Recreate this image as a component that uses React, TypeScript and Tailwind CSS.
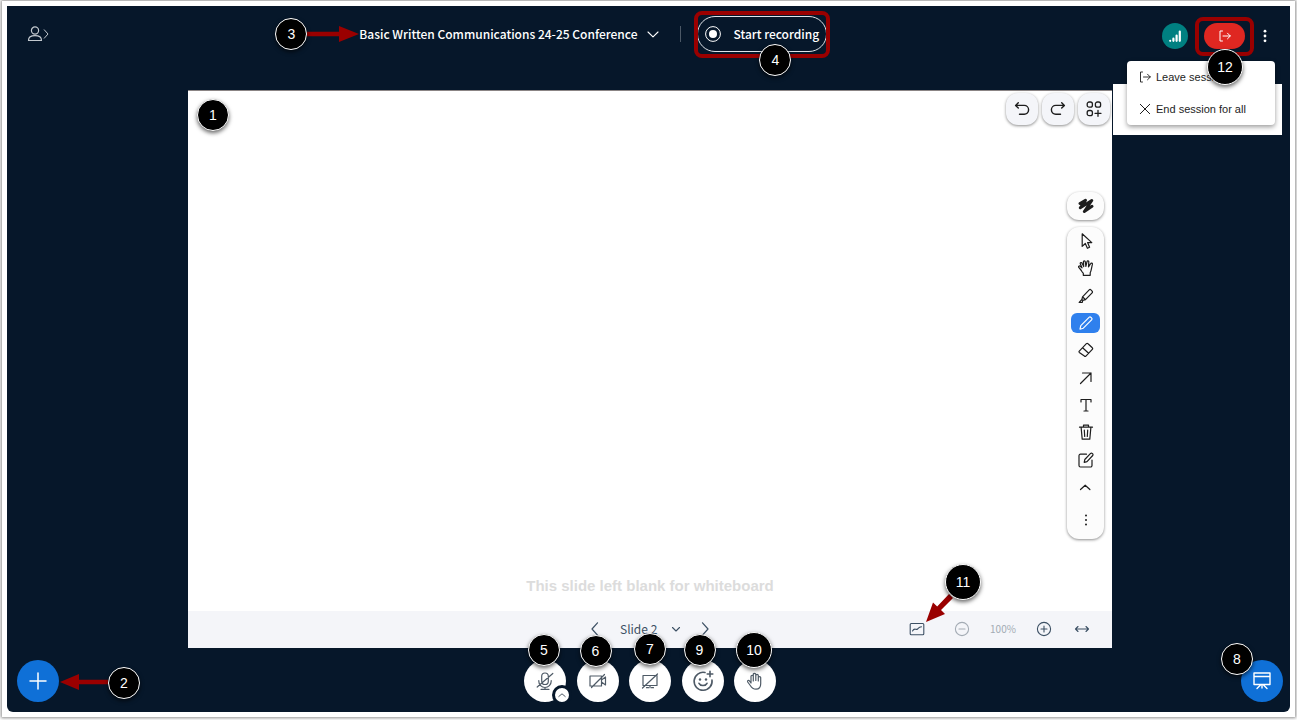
import React from 'react';

interface IconProps {
  d: string;
  size?: string;
  box?: number;
  stroke?: number;
  children?: React.ReactNode;
}

const Icon: React.FC<IconProps> = ({ d, size = 'size-4', box = 16, stroke = 1.2, children }) => (
  <svg
    className={`${size} shrink-0`}
    viewBox={`0 0 ${box} ${box}`}
    fill="none"
    stroke="currentColor"
    strokeWidth={stroke}
    strokeLinecap="round"
    strokeLinejoin="round"
    aria-hidden="true"
  >
    <path d={d} />
    {children}
  </svg>
);

const Dots: React.FC = () => (
  <svg className="size-4" viewBox="0 0 16 16" fill="currentColor" aria-hidden="true">
    <circle cx="8" cy="3.2" r="1.4" />
    <circle cx="8" cy="8" r="1.4" />
    <circle cx="8" cy="12.8" r="1.4" />
  </svg>
);

interface MarkerProps {
  n: number;
  className: string;
  large?: boolean;
}

const Marker: React.FC<MarkerProps> = ({ n, className, large }) => (
  <span
    className={`absolute z-30 flex items-center justify-center rounded-full border border-white bg-black text-sm font-normal text-white shadow-[0_2px_4px_rgba(0,0,0,0.6)] font-['Liberation_Sans',sans-serif] ${
      large ? 'size-9' : 'size-8'
    } ${className}`}
  >
    {n}
  </span>
);

const tools = [
  { name: 'Select', d: 'M4.2.8v12.6l3.1-2.9 2.1 4.8 2.2-1-2-4.7h4.2z' },
  {
    name: 'Hand',
    d: 'M3.3 10.5.8 7.4c-.7-1 .5-2 1.4-1.1L4 7.8 2.3 3.8c-.4-1.2 1.3-1.8 1.8-.6l1.6 3.4L5.4 1.8c0-1.3 1.7-1.4 1.9 0l.6 4.6L9 1.7c.3-1.2 2-.9 1.8.3l-.3 4.8 2.1-3.2c.6-1 2.1-.4 1.8.8-.9 3-.9 6-2.2 8.3v2.6H5.3v-2c-1-.9-1.4-1.7-2-2.8z',
  },
  {
    name: 'Highlight',
    d: 'M4.5 8.8 11.2 1.9c.5-.5 1.2-.5 1.7 0l1.2 1.2c.5.5.5 1.2 0 1.7L7.5 11.7M4.5 8.8l-.6 2.7.9.9 2.7-.7L4.5 8.8M3.9 11.5 1.2 14.5h3l.6-2.1',
  },
  { name: 'Draw', d: 'M2 14.2l.8-3.5 8.5-8.5c1-1 3.5 1.5 2.5 2.5l-8.5 8.5z', active: true },
  {
    name: 'Eraser',
    d: 'M1.3 9.1 8.4 1.7c.5-.5 1.1-.5 1.6 0l4.3 4.1c.5.5.5 1.1 0 1.6l-6.4 6.7c-.5.5-1 .5-1.5 0L1.3 10.4c-.5-.4-.4-.9 0-1.3zM4.6 5.7l6 5.6',
  },
  { name: 'Arrow', d: 'M2.5 13.5 13 3M4.5 3H13v8.5' },
  { name: 'Text', d: 'M3 5V2.5h10V5M8 2.5V14M6 14h4' },
  { name: 'Delete', d: 'M1.5 3.2h13M5.5 3.2V1.2h5v2M3.1 3.2l1.1 11.9h7.6l1.1-11.9M6.3 6l.4 6.5M9.7 6l-.4 6.5' },
  {
    name: 'Note',
    d: 'M8.5 2.2H2.5A1.5 1.5 0 0 0 1 3.7v9.8A1.5 1.5 0 0 0 2.5 15h10a1.5 1.5 0 0 0 1.5-1.5V8M6.2 10.4l.6-2.9 5.8-6.1c1.1-1 3.2 1 2.1 2.1L9 9.7z',
  },
  { name: 'Collapse', d: 'M2.5 10.5 7.2 6.2l4.7 4.3' },
];

const boardButton =
  'flex size-8 items-center justify-center rounded-xl bg-[#f4f5f9] text-[#1d1d1d] shadow-[0_1px_3px_rgba(0,0,0,0.45)]';
const mediaButton = 'flex size-[42px] items-center justify-center rounded-full bg-white text-[#4e5a66]';

const Header: React.FC = () => (
  <header className="relative z-10 grid h-[84px] grid-cols-[351fr_auto_461fr] items-start pt-[10px] text-white">
    <div className="flex h-9 items-center pl-5">
      <button type="button" aria-label="Users and messages" className="flex items-center text-[#c3c9cf]">
        <Icon size="size-4" d="M1.5 14.5c0-3.4 2.3-4.8 6.5-4.8s6.5 1.4 6.5 4.8z">
          <circle cx="8" cy="4.5" r="3.6" />
        </Icon>
        <svg className="h-4 w-[6px]" viewBox="0 0 6 16" fill="none" stroke="currentColor" aria-hidden="true">
          <path d="M1 3.500 5 8l-4 4.500" />
        </svg>
      </button>
    </div>

    <div className="flex h-9 items-center">
      <div className="relative">
        <button type="button" className="flex items-center gap-[10px] text-xs font-medium">
          Basic Written Communications 24-25 Conference
          <Icon size="size-3" box={12} stroke={1.1} d="M1 4l5 4.8L11 4" />
        </button>
        <Marker n={3} className="top-1/2 -left-[84px] -translate-y-1/2" />
        <svg className="absolute top-1/2 -left-[52px] h-4 w-[52px] -translate-y-1/2" viewBox="0 0 52 16" fill="#9a0000" aria-hidden="true">
          <path d="M0 5.700h32V0l20 8-20 8v-5.700H0z" />
        </svg>
      </div>
      <span className="mr-4 ml-[21px] h-4 w-px bg-[#4b5866]" />
      <div className="relative">
        <button
          type="button"
          className="flex h-9 items-center gap-3 rounded-full border border-[#dfe3e8] px-[7px] text-xs font-medium"
        >
          <svg className="size-4" viewBox="0 0 16 16" fill="none" stroke="currentColor" aria-hidden="true">
            <circle cx="8" cy="8" r="7.4" />
            <circle cx="8" cy="8" r="4" fill="currentColor" stroke="none" />
          </svg>
          Start recording
        </button>
        <span className="pointer-events-none absolute -inset-x-[3px] -top-[5px] -bottom-[6px] rounded-lg border-4 border-[#9a0000]" />
        <Marker n={4} className="top-7 left-[62px]" />
      </div>
    </div>

    <div className="flex h-10 items-center justify-end gap-3 pr-[17px]">
      <button type="button" aria-label="Connection status" className="mr-1 flex size-[26px] items-center justify-center rounded-full bg-[#008081]">
        <svg className="h-3 w-3" viewBox="0 0 12 12" fill="none" stroke="currentColor" strokeWidth="2.2" strokeLinecap="round" aria-hidden="true">
          <path d="M1.2 10.8v.01M4.4 10.8V8.7M7.6 10.8V5.5M10.8 10.8V1.5" />
        </svg>
      </button>
      <div className="relative">
        <button type="button" aria-label="Leave" className="flex h-[26px] w-[41px] items-center justify-center rounded-full bg-[#df2721]">
          <Icon size="size-3" box={12} stroke={1} d="M3.500 1H1v10h2.500M4 6h7.300M8.500 3.200 11.300 6 8.500 8.800" />
        </button>
        <span className="pointer-events-none absolute -inset-x-[9px] -top-[6px] -bottom-[7px] rounded-lg border-4 border-[#9a0000]" />
        <div className="absolute top-[61px] -left-[91px] h-[51px] w-[169px] bg-white" />
        <div className="absolute top-[38px] -left-[77px] w-[148px] rounded bg-white text-[11px] text-[#1d1d1d] shadow-[0_2px_5px_rgba(0,0,0,0.4)] font-['Liberation_Sans',sans-serif]">
          <button type="button" className="flex h-8 w-full items-center gap-[5px] pl-3">
            <Icon size="size-3" box={12} stroke={0.9} d="M3.500 1H1.500v10h2M4.500 6h6.800M8.500 3.200 11.300 6 8.500 8.800" />
            Leave session
          </button>
          <button type="button" className="flex h-8 w-full items-center gap-[5px] pl-3">
            <Icon size="size-3" box={12} stroke={1} d="M1.300 1.300l9.400 9.400M10.700 1.300l-9.400 9.400" />
            End session for all
          </button>
        </div>
        <Marker n={12} large className="top-[26px] left-[3px]" />
      </div>
      <button type="button" aria-label="Options">
        <Dots />
      </button>
    </div>
  </header>
);

const Whiteboard: React.FC = () => (
  <section className="relative flex flex-1 flex-col items-end border-t border-[#8b8585] bg-white pt-[2px]">
    <Marker n={1} className="top-2 left-[9px]" />
    <div className="mr-[2px] flex gap-1">
      <button type="button" aria-label="Undo" className={boardButton}>
        <Icon stroke={1.4} d="M4.300 1.800 1.600 4.400l2.700 2.700M1.600 4.400h8.600a4.400 4.400 0 0 1 0 8.800H5.500" />
      </button>
      <button type="button" aria-label="Redo" className={boardButton}>
        <Icon stroke={1.4} d="M11.700 1.800l2.700 2.600-2.700 2.700M14.400 4.400H5.800a4.400 4.400 0 0 0 0 8.800h4.700" />
      </button>
      <button type="button" aria-label="Actions" className={boardButton}>
        <Icon stroke={1.3} d="M12 9.300v6M9 12.300h6">
          <rect x="1.2" y="1" width="5.2" height="5.2" rx="2" />
          <rect x="9.4" y="1" width="5.2" height="5.2" rx="2" />
          <rect x="1.2" y="9.5" width="5.2" height="5.2" rx="2" />
        </Icon>
      </button>
    </div>

    <button
      type="button"
      aria-label="Styles"
      className="mt-[67px] mr-2 flex h-7 w-[37px] items-center justify-center rounded-xl bg-[#fcfcfc] text-[#1d1d1d] shadow-[0_1px_3px_rgba(0,0,0,0.45)]"
    >
      <Icon stroke={2.9} d="M2 5.500 7.500 2.300 2.300 9.800 13.800 2.500 6.300 13.500 14 8.300" />
    </button>

    <div
      role="toolbar"
      aria-label="Drawing tools"
      className="mt-[7px] mr-2 flex w-[37px] flex-col items-center rounded-xl bg-[#fcfcfc] px-1 pt-1 pb-[9px] text-[#1d1d1d] shadow-[0_1px_3px_rgba(0,0,0,0.45)]"
    >
      <div className="flex h-[266px] w-full flex-col justify-between">
        {tools.map((tool) => (
          <button
            key={tool.name}
            type="button"
            aria-label={tool.name}
            className={`flex h-5 items-center justify-center rounded-md ${tool.active ? 'bg-[#2f80ed] text-white' : ''}`}
          >
            <Icon d={tool.d} />
          </button>
        ))}
      </div>
      <button type="button" aria-label="More" className="mt-[13px] flex h-5 items-center">
        <svg className="size-4" viewBox="0 0 16 16" fill="currentColor" aria-hidden="true">
          <circle cx="8" cy="3.5" r="1" />
          <circle cx="8" cy="8" r="1" />
          <circle cx="8" cy="12.5" r="1" />
        </svg>
      </button>
    </div>

    <p className="mt-auto mb-[15px] self-center pt-8 text-[15px] leading-5 font-bold text-[#dcdcdc] font-['Liberation_Sans',sans-serif]">
      This slide left blank for whiteboard
    </p>
  </section>
);

const SlideBar: React.FC = () => (
  <nav className="grid h-[37px] grid-cols-[1fr_auto_1fr] items-center bg-[#f4f5f9] pb-[2px] text-[#3c5064]">
    <div />
    <div className="flex items-center">
      <button type="button" aria-label="Previous slide">
        <Icon d="M10.500 1.800 5 8l5.500 6.200" />
      </button>
      <div className="relative ml-[17px] flex items-center">
        <select aria-label="Slide" className="w-[61px] appearance-none bg-transparent text-xs text-[#3c5064]">
          <option>Slide 2</option>
        </select>
        <span className="pointer-events-none absolute right-0">
          <Icon size="size-[10px]" box={10} stroke={1.1} d="M1.500 3.500 5 7l3.500-3.500" />
        </span>
      </div>
      <button type="button" aria-label="Next slide" className="ml-4">
        <Icon d="M5.500 1.800 11 8l-5.500 6.200" />
      </button>
    </div>
    <div className="flex items-center justify-end pr-[22px]">
      <div className="relative mr-[29px] flex">
        <button type="button" aria-label="Infinite whiteboard">
          <Icon stroke={1.1} d="M3.500 10c2-4 3.500-.5 5-2s1.500-2 4-2.300">
            <rect x="1.2" y="2.5" width="13.6" height="11.2" rx="1" />
          </Icon>
        </button>
        <svg className="absolute -top-[27px] left-[17px] z-20 h-7 w-7" viewBox="0 0 28 28" fill="#9a0000" aria-hidden="true">
          <path d="M0 28 7 8.500l4.200 4L23 0l4 4-12 12 4 4z" />
        </svg>
        <Marker n={11} large className="-top-[57px] left-9" />
      </div>
      <button type="button" aria-label="Zoom out" className="text-[#a3abb4]">
        <Icon stroke={1.1} d="M5 8h6">
          <circle cx="8" cy="8" r="6.6" />
        </Icon>
      </button>
      <button type="button" className="w-[66px] text-center text-[10px] text-[#a3abb4]">
        100%
      </button>
      <button type="button" aria-label="Zoom in">
        <Icon stroke={1.1} d="M5 8h6M8 5v6">
          <circle cx="8" cy="8" r="6.6" />
        </Icon>
      </button>
      <button type="button" aria-label="Fit to width" className="ml-[22px]">
        <Icon stroke={1.1} d="M1.500 8h13M4 5.500 1.500 8 4 10.500M12 5.500 14.500 8 12 10.500" />
      </button>
    </div>
  </nav>
);

const ActionsBar: React.FC = () => (
  <footer className="flex h-16 items-start justify-between pt-3 pr-[7px] pl-[10px]">
    <div className="relative">
      <button type="button" aria-label="Actions" className="flex size-[42px] items-center justify-center rounded-full bg-[#0f70d7] text-white">
        <Icon size="size-5" box={20} stroke={1.5} d="M10 2v16M2 10h16" />
      </button>
      <svg className="absolute top-[14px] left-[43px] h-4 w-12" viewBox="0 0 48 16" fill="#9a0000" aria-hidden="true">
        <path d="M48 5.700H19V0L0 8l19 8v-5.700h29z" />
      </svg>
      <Marker n={2} className="top-[7px] left-[91px]" />
    </div>

    <div className="flex w-[252px] justify-between">
      <div className="relative">
        <button type="button" aria-label="Unmute" className={mediaButton}>
          <Icon
            size="size-[18px]"
            box={18}
            d="M5.700 4.300a3.300 3.300 0 0 1 6.600 0v4.900a3.300 3.300 0 0 1-6.600 0zM2.800 8.500v.8a6.200 6.200 0 0 0 12.400 0v-.8M9 15.500V17.300M5 17.300h8M16.800 1.500 1.200 15"
          />
        </button>
        <button
          type="button"
          aria-label="Change audio device"
          className="absolute top-[25px] left-[28px] flex size-5 items-center justify-center rounded-full border-[3px] border-[#06172a] bg-white text-[#4e5a66]"
        >
          <Icon size="size-2" box={8} stroke={1} d="M.8 5.500 4 2.800l3.200 2.700" />
        </button>
        <Marker n={5} className="-top-[26px] left-1" />
      </div>
      <div className="relative">
        <button type="button" aria-label="Share webcam" className={mediaButton}>
          <Icon size="size-[18px]" box={18} d="M1 4h11.500v10H1zM12.500 8l4-3v8l-4-3M15.500 2.500l-13 13" />
        </button>
        <Marker n={6} className="-top-[25px] left-[3px]" />
      </div>
      <div className="relative">
        <button type="button" aria-label="Share screen" className={mediaButton}>
          <Icon size="size-[18px]" box={18} d="M2 3.500h14v10H2zM5.500 15.700h2M10.500 15.700h2M9 13.500v2.200M16.500 2l-15 14" />
        </button>
        <Marker n={7} className="-top-[27px] left-[5px]" />
      </div>
      <div className="relative">
        <button type="button" aria-label="Reactions" className={mediaButton}>
          <Icon size="size-[22px]" box={22} stroke={1.6} d="M13 2.500a9 9 0 1 0 7 7.500M7 13.300c1.500 3 6.500 3 8 0M18 1.200v5.600M15.200 4h5.600">
            <circle cx="8" cy="9.5" r="1.2" fill="currentColor" stroke="none" />
            <circle cx="14" cy="9.5" r="1.2" fill="currentColor" stroke="none" />
          </Icon>
        </button>
        <Marker n={9} className="-top-[26px] left-[2px]" />
      </div>
      <div className="relative">
        <button type="button" aria-label="Raise hand" className={mediaButton}>
          <Icon
            size="size-[18px]"
            box={18}
            stroke={1.2}
            d="M5 11V4.300c0-1.300 2.300-1.300 2.300 0V9M7.300 8.500V2.400c0-1.500 2.500-1.500 2.500 0v6.100M9.800 8.500v-5c0-1.400 2.500-1.400 2.500 0V9M12.300 9V5.500c0-1.300 2.400-1.300 2.400 0v6.300c0 3.400-1.700 5.400-4.700 5.400-3.200 0-4.500-1.600-5.700-3.700L1.700 10c-.6-1.200.8-2.200 1.700-1.100L5 11"
          />
        </button>
        <Marker n={10} large className="-top-[28px] left-[2px]" />
      </div>
    </div>

    <div className="relative">
      <button type="button" aria-label="Minimize presentation" className="flex size-[42px] items-center justify-center rounded-full bg-[#0f70d7] text-white">
        <Icon size="size-5" box={20} stroke={1.4} d="M2 2h16v11.500H2zM2 5.500h16M10 13.500V17M8.500 14 5 17.500M11.500 14l3.500 3.500" />
      </button>
      <Marker n={8} className="-top-[17px] -left-5" />
    </div>
  </footer>
);

export default function App() {
  return (
    <div className="flex min-h-screen flex-col bg-white px-[2px] pt-px pb-[3px] font-['Noto_Sans_CJK_JP',Lato,sans-serif]">
      <div className="flex flex-1 flex-col bg-white px-[5px] py-[5px] shadow-[0_0_3px_1px_rgba(0,0,0,0.45)]">
        <div className="flex flex-1 flex-col rounded-b-md bg-[#06172a]">
          <Header />
          <main className="grid flex-1 grid-cols-[181fr_924fr_178fr]">
            <div className="col-start-2 flex flex-col">
              <Whiteboard />
              <SlideBar />
            </div>
          </main>
          <ActionsBar />
        </div>
      </div>
    </div>
  );
}
